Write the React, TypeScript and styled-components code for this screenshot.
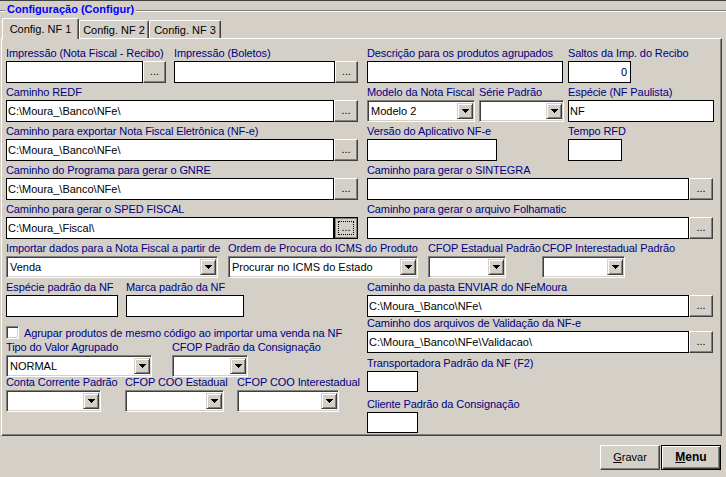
import React from "react";
import styled, { createGlobalStyle } from "styled-components";

const GlobalStyle = createGlobalStyle`
  html, body {
    margin: 0;
    padding: 0;
    background: #d4d0c8;
  }
  body {
    font-family: "Liberation Sans", Arial, sans-serif;
    font-size: 11px;
    color: #000;
  }
`;

const Window = styled.div`
  width: 726px;
  height: 477px;
  box-sizing: border-box;
  background: #d4d0c8;
  border-top: 1px solid #404040;
  display: flex;
  flex-direction: column;
  overflow: hidden;
`;

const GroupHead = styled.div`
  display: flex;
  align-items: flex-start;
  height: 15px;
  padding-top: 2px;
`;

const GroupLine = styled.div<{ $w?: number }>`
  margin-top: 7px;
  height: 0;
  border-top: 1px solid #808080;
  border-bottom: 1px solid #fff;
  ${p => (p.$w ? `width: ${p.$w}px;` : "flex: 1;")}
`;

const GroupTitle = styled.div`
  padding: 0 2px;
  line-height: 13px;
  font-weight: bold;
  color: #0000ff;
  white-space: nowrap;
`;

const TabStrip = styled.div`
  display: flex;
  align-items: flex-end;
  height: 20px;
  padding-left: 2px;
`;

const Tab = styled.div<{ $w: number; $active?: boolean }>`
  position: relative;
  z-index: ${p => (p.$active ? 1 : 0)};
  box-sizing: border-box;
  width: ${p => p.$w}px;
  height: ${p => (p.$active ? 21 : 18)}px;
  margin-bottom: ${p => (p.$active ? -1 : 0)}px;
  background: #d4d0c8;
  border-left: 1px solid #fff;
  border-top: 1px solid #fff;
  border-right: 1px solid #404040;
  border-radius: 2px 2px 0 0;
  box-shadow: inset -1px 0 #808080;
  display: flex;
  justify-content: center;
  padding-top: ${p => (p.$active ? 4 : 3)}px;
  line-height: 13px;
  white-space: nowrap;
`;

const Page = styled.div`
  margin-left: 1px;
  width: 721px;
  height: 398px;
  box-sizing: border-box;
  border-style: solid;
  border-width: 1px;
  border-color: #fff #404040 #404040 #fff;
  box-shadow: inset -1px -1px #808080;
  padding: 8px 0 0 4px;
  display: flex;
  flex-direction: column;
  gap: 3px;
  overflow: hidden;
`;

const FormRow = styled.div<{ $cols: string; $top?: number }>`
  display: grid;
  grid-template-columns: ${p => p.$cols};
  align-items: start;
  margin-top: ${p => p.$top ?? 0}px;
`;

const Split = styled.div`
  display: grid;
  grid-template-columns: 361px 346px;
  align-items: start;
`;

const Stack = styled.div`
  display: flex;
  flex-direction: column;
`;

const Field = styled.div<{ $w: number; $top?: number }>`
  display: flex;
  flex-direction: column;
  width: ${p => p.$w}px;
  margin-top: ${p => p.$top ?? 0}px;
`;

const Label = styled.div`
  height: 13px;
  line-height: 13px;
  margin-bottom: 1px;
  color: #000080;
  white-space: nowrap;
  letter-spacing: -0.1px;
`;

const Edit = styled.input<{ $h?: number; $right?: boolean; $grow?: boolean }>`
  flex: ${p => (p.$grow ? "1 1 0" : "none")};
  min-width: 0;
  width: ${p => (p.$grow ? "auto" : "100%")};
  height: ${p => p.$h ?? 22}px;
  box-sizing: border-box;
  margin: 0;
  border: 1px solid #000;
  border-radius: 0;
  outline: none;
  background: #fff;
  padding: 0 ${p => (p.$right ? 3 : 2)}px 0 1px;
  font: inherit;
  color: #000;
  text-align: ${p => (p.$right ? "right" : "left")};
`;

const PathBox = styled.div`
  display: flex;
  height: 22px;
`;

const BrowseButton = styled.div<{ $w: number; $focused?: boolean }>`
  flex: none;
  width: ${p => p.$w}px;
  height: 22px;
  box-sizing: border-box;
  background: #d4d0c8;
  border-style: solid;
  border-width: 1px;
  border-color: ${p => (p.$focused ? "#000" : "#fff #404040 #404040 #fff")};
  box-shadow: ${p => (p.$focused ? "inset 1px 1px #808080, inset -1px -1px #808080" : "inset -1px -1px #808080")};
  display: flex;
  align-items: center;
  justify-content: center;
  line-height: 13px;
  padding-bottom: 1px;
`;

const FocusRing = styled.div`
  box-sizing: border-box;
  width: 16px;
  height: 14px;
  border: 1px dotted #000;
  display: flex;
  align-items: center;
  justify-content: center;
  line-height: 11px;
`;

const ComboBox = styled.div`
  display: flex;
  height: 22px;
  box-sizing: border-box;
  background: #fff;
  border-style: solid;
  border-width: 1px;
  border-color: #808080 #fff #fff #808080;
  box-shadow: inset 1px 1px #404040, inset -1px -1px #d4d0c8;
  padding: 2px 1px 2px 1px;
`;

const ComboText = styled.div`
  flex: 1;
  padding-left: 2px;
  line-height: 16px;
  white-space: nowrap;
  overflow: hidden;
`;

const DropButton = styled.div`
  width: 16px;
  height: 16px;
  box-sizing: border-box;
  background: #d4d0c8;
  border-style: solid;
  border-width: 1px;
  border-color: #d4d0c8 #404040 #404040 #d4d0c8;
  box-shadow: inset 1px 1px #fff, inset -1px -1px #808080;
  display: flex;
  align-items: center;
  justify-content: center;
`;

const CheckRow = styled.label`
  display: flex;
  align-items: center;
  gap: 5px;
  height: 13px;
  margin-top: 9px;
  color: #000080;
  white-space: nowrap;
  letter-spacing: -0.1px;
`;

const CheckBox = styled.span`
  width: 13px;
  height: 13px;
  box-sizing: border-box;
  background: #fff;
  border-style: solid;
  border-width: 1px;
  border-color: #808080 #fff #fff #808080;
  box-shadow: inset 1px 1px #404040, inset -1px -1px #d4d0c8;
`;

const Footer = styled.div`
  display: flex;
  justify-content: flex-end;
  gap: 1px;
  padding: 9px 5px 0 0;
`;

const PushButton = styled.div<{ $default?: boolean }>`
  width: 60px;
  height: 25px;
  box-sizing: border-box;
  background: #d4d0c8;
  border-style: solid;
  border-width: 1px;
  border-color: ${p => (p.$default ? "#000" : "#fff #404040 #404040 #fff")};
  box-shadow: ${p =>
    p.$default
      ? "inset 1px 1px #fff, inset -1px -1px #404040, inset -2px -2px #808080"
      : "inset -1px -1px #808080"};
  display: flex;
  align-items: center;
  justify-content: center;
  font-weight: ${p => (p.$default ? "bold" : "normal")};
  font-size: ${p => (p.$default ? 12 : 11)}px;
  line-height: 13px;
`;

const Arrow = () => (
  <svg width="7" height="4" viewBox="0 0 7 4" shapeRendering="crispEdges">
    <rect x="0" y="0" width="7" height="1" fill="#000" />
    <rect x="1" y="1" width="5" height="1" fill="#000" />
    <rect x="2" y="2" width="3" height="1" fill="#000" />
    <rect x="3" y="3" width="1" height="1" fill="#000" />
  </svg>
);

type TextProps = { label: string; w: number; value?: string; right?: boolean; h?: number; top?: number };

const TextField = ({ label, w, value = "", right, h, top }: TextProps) => (
  <Field $w={w} $top={top}>
    <Label>{label}</Label>
    <Edit readOnly defaultValue={value} $right={right} $h={h} />
  </Field>
);

type PathProps = { label: string; w: number; value?: string; btn?: number; focused?: boolean; top?: number };

const PathField = ({ label, w, value = "", btn = 24, focused, top }: PathProps) => (
  <Field $w={w} $top={top}>
    <Label>{label}</Label>
    <PathBox>
      <Edit readOnly defaultValue={value} $grow />
      <BrowseButton $w={btn} $focused={focused}>
        {focused ? <FocusRing>...</FocusRing> : "..."}
      </BrowseButton>
    </PathBox>
  </Field>
);

const ComboField = ({ label, w, value = "" }: { label: string; w: number; value?: string }) => (
  <Field $w={w}>
    <Label>{label}</Label>
    <ComboBox>
      <ComboText>{value}</ComboText>
      <DropButton>
        <Arrow />
      </DropButton>
    </ComboBox>
  </Field>
);

const banco = "C:\\Moura_\\Banco\\NFe\\";

export default function App() {
  return (
    <>
      <GlobalStyle />
      <Window>
        <GroupHead>
          <GroupLine $w={5} />
          <GroupTitle>Configuração (Configur)</GroupTitle>
          <GroupLine />
        </GroupHead>
        <TabStrip>
          <Tab $w={77} $active>Config. NF 1</Tab>
          <Tab $w={70}>Config. NF 2</Tab>
          <Tab $w={72}>Config. NF 3</Tab>
        </TabStrip>
        <Page>
          <FormRow $cols="168px 193px 201px 1fr">
            <PathField label="Impressão (Nota Fiscal - Recibo)" w={160} btn={23} />
            <PathField label="Impressão (Boletos)" w={184} btn={23} />
            <TextField label="Descrição para os produtos agrupados" w={196} />
            <TextField label="Saltos da Imp. do Recibo" w={63} value="0" right />
          </FormRow>
          <FormRow $cols="361px 112px 89px 1fr">
            <PathField label="Caminho REDF" w={352} value={banco} />
            <ComboField label="Modelo da Nota Fiscal" w={108} value="Modelo 2" />
            <ComboField label="Série Padrão" w={85} />
            <TextField label="Espécie (NF Paulista)" w={146} value="NF" />
          </FormRow>
          <FormRow $cols="361px 201px 1fr">
            <PathField label="Caminho para exportar Nota Fiscal Eletrônica (NF-e)" w={352} value={banco} />
            <TextField label="Versão do Aplicativo NF-e" w={130} />
            <TextField label="Tempo RFD" w={54} />
          </FormRow>
          <FormRow $cols="361px 1fr">
            <PathField label="Caminho do Programa para gerar o GNRE" w={352} value={banco} />
            <PathField label="Caminho para gerar o SINTEGRA" w={346} />
          </FormRow>
          <FormRow $cols="361px 1fr">
            <PathField label="Caminho para gerar o SPED FISCAL" w={352} value={"C:\\Moura_\\Fiscal\\"} focused />
            <PathField label="Caminho para gerar o arquivo Folhamatic" w={346} />
          </FormRow>
          <FormRow $cols="222px 200px 114px 1fr">
            <ComboField label="Importar dados para a Nota Fiscal a partir de" w={212} value="Venda" />
            <ComboField label="Ordem de Procura do ICMS do Produto" w={190} value="Procurar no ICMS do Estado" />
            <ComboField label="CFOP Estadual Padrão" w={78} />
            <ComboField label="CFOP Interestadual Padrão" w={83} />
          </FormRow>
          <Split>
            <Stack>
              <FormRow $cols="120px 1fr">
                <TextField label="Espécie padrão da NF" w={112} />
                <TextField label="Marca padrão da NF" w={118} />
              </FormRow>
              <CheckRow>
                <CheckBox />
                Agrupar produtos de mesmo código ao importar uma venda na NF
              </CheckRow>
              <FormRow $cols="166px 1fr" $top={2}>
                <ComboField label="Tipo do Valor Agrupado" w={146} value="NORMAL" />
                <ComboField label="CFOP Padrão da Consignação" w={76} />
              </FormRow>
              <FormRow $cols="119px 112px 1fr" $top={-1}>
                <ComboField label="Conta Corrente Padrão" w={95} />
                <ComboField label="CFOP COO Estadual" w={99} />
                <ComboField label="CFOP COO Interestadual" w={102} />
              </FormRow>
            </Stack>
            <Stack>
              <PathField label="Caminho da pasta ENVIAR do NFeMoura" w={346} value={banco} />
              <PathField label="Caminho dos arquivos de Validação da NF-e" w={346} value={"C:\\Moura_\\Banco\\NFe\\Validacao\\"} />
              <TextField label="Transportadora Padrão da NF (F2)" w={51} h={21} top={4} />
              <TextField label="Cliente Padrão da Consignação" w={51} h={21} top={6} />
            </Stack>
          </Split>
        </Page>
        <Footer>
          <PushButton>
            <span>
              <u>G</u>ravar
            </span>
          </PushButton>
          <PushButton $default>
            <span>
              <u>M</u>enu
            </span>
          </PushButton>
        </Footer>
      </Window>
    </>
  );
}
